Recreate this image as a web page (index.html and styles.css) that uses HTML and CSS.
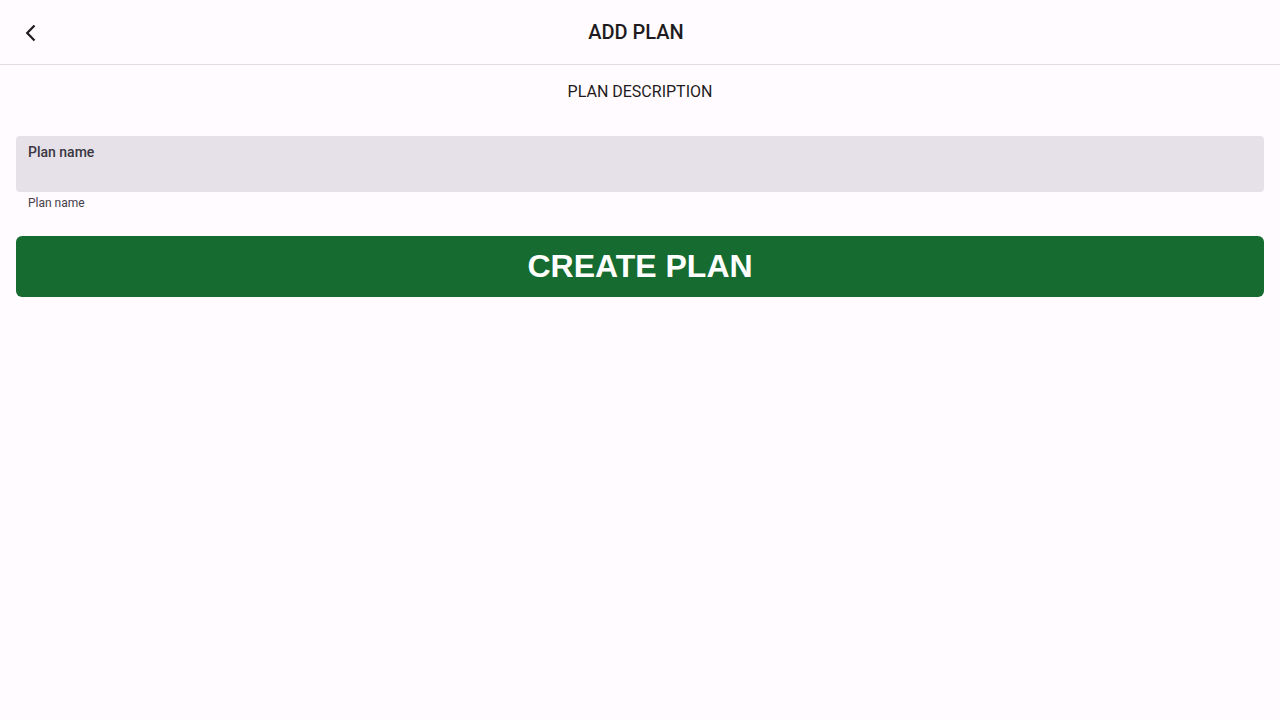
FILE: index.html
```html
<!DOCTYPE html>
<html>
<head>
    <meta charset="UTF-8">
    <title>Add Plan</title>
    <link rel="stylesheet" href="styles.css">
</head>
<body>
    <div class="app-bar">
        <button class="back-btn" aria-label="Back">
            <svg width="24" height="24" viewBox="0 0 24 24">
                <path d="M16.5 5.5 L9.2 13 L16.5 20.5" fill="none" stroke="#1d1b20" stroke-width="2.2"/>
            </svg>
        </button>
        <h1 class="title">ADD PLAN</h1>
    </div>

    <div class="content">
        <div class="section-title">PLAN DESCRIPTION</div>

        <div class="field">
            <div class="field-box">
                <label class="field-label">Plan name</label>
            </div>
            <div class="helper">Plan name</div>
        </div>

        <button class="create-btn">CREATE PLAN</button>
    </div>
</body>
</html>
```

FILE: styles.css
```css
body {
    margin: 0;
    background-color: #fffbfe;
    font-family: Roboto, "Noto Sans", sans-serif;
    color: #1d1b20;
}
.app-bar {
    height: 64px;
    border-bottom: 1px solid #e0dde0;
    display: flex;
    align-items: center;
    position: relative;
}
.back-btn {
    background: none;
    border: none;
    padding: 0;
    margin-left: 18px;
    width: 24px;
    height: 24px;
    cursor: pointer;
    position: relative;
    z-index: 1;
}
.title {
    position: absolute;
    left: 0;
    right: 0;
    text-align: center;
    margin: 0;
    font-size: 20px;
    font-weight: 500;
    margin-left: -8px;
}
.content {
    padding: 0 16px;
}
.section-title {
    text-align: center;
    font-size: 16px;
    padding-top: 17px;
    height: 38px;
    line-height: 19px;
    margin-bottom: 16px;
    color: #1d1b20;
}
.field-box {
    height: 56px;
    background-color: #e6e0e9;
    border-radius: 4px;
    box-sizing: border-box;
    padding: 6px 12px;
}
.field-label {
    font-size: 14px;
    font-weight: 500;
    color: #3a3740;
    line-height: 16px;
}
.helper {
    font-size: 12px;
    color: #44404a;
    padding: 3px 12px 0;
    height: 19px;
    line-height: 16px;
}
.create-btn {
    margin-top: 22px;
    width: 100%;
    height: 61px;
    border: none;
    border-radius: 6px;
    background-color: #166c30;
    color: #ffffff;
    font-family: "Liberation Sans", Arial, sans-serif;
    font-weight: bold;
    font-size: 32px;
    cursor: pointer;
}
```
